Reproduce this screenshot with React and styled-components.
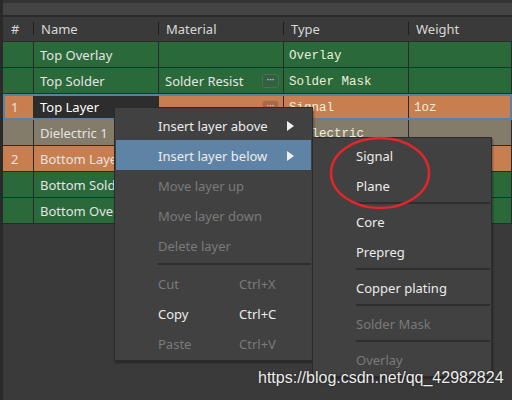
import React from 'react'
import styled, { createGlobalStyle } from 'styled-components'

const green = '#2a693a'
const orange = '#c97e4f'
const dielectric = '#847c6a'
const gridLine = '#2a2a2a'

const GlobalStyle = createGlobalStyle`
    body {
        margin : 0;
        background : #3a3a3a;
        font-family : "Noto Sans", "Open Sans", sans-serif;
    }
`

const Screen = styled.div`
    position : relative;
    width : 512px;
    height : 400px;
    overflow : hidden;
    background : #3a3a3a;
    border-left : 3px solid ${gridLine};
    box-sizing : border-box;
`

const TopStrip = styled.div`
    height : 12px;
    background : #444444;
    border-top : 3px solid #333333;
    border-bottom : 2px solid ${gridLine};
`

const Table = styled.div`
    display : flex;
    flex-direction : column;
`

const Row = styled.div`
    display : grid;
    grid-template-columns : 31px 125px 125px 125px 1fr;
    height : 26px;
    box-sizing : border-box;
    border-bottom : 1px solid ${gridLine};
    background : ${p => p.$bg || 'transparent'};
    color : #e4e4e4;
    font-size : 13px;
    outline : ${p => p.$selected ? '2px solid #5b80a7' : 'none'};
    outline-offset : -2px;
`

const HeaderRow = styled(Row)`
    height : 25px;
    border-bottom : 1px solid ${gridLine};
    color : #d8d8d8;
`

const HeadCell = styled.div`
    position : relative;
    display : flex;
    align-items : center;
    padding-left : ${p => p.$first ? '8px' : '7px'};

    &::before {
        content : '';
        display : ${p => p.$first ? 'none' : 'block'};
        position : absolute;
        left : -1px;
        top : 5px;
        height : 13px;
        width : 1px;
        background : #1f1f1f;
    }
`

const Cell = styled.div`
    display : flex;
    align-items : center;
    padding : 0 4px 0 6px;
    border-right : 1px solid ${gridLine};
    background : ${p => p.$dark ? '#2d2d2d' : 'transparent'};
    color : ${p => p.$dark ? '#ffffff' : 'inherit'};
    white-space : nowrap;
    overflow : hidden;
`

const IndexCell = styled(Cell)`
    padding-left : 8px;
`

const MonoCell = styled(Cell)`
    font-family : "Liberation Mono", "DejaVu Sans Mono", monospace;
    font-size : 12.5px;
    color : #efeedc;
    padding : 2px 4px 0 5px;
`

const DotsButton = styled.span`
    margin-left : auto;
    width : 17px;
    height : 14px;
    box-sizing : border-box;
    border-radius : 3px;
    border : 1px solid ${p => p.$edge};
    background : ${p => p.$fill};
    color : #d0d0d0;
    font-size : 10px;
    line-height : 9px;
    display : flex;
    justify-content : center;
`

const Menu = styled.div`
    position : absolute;
    left : ${p => p.$left}px;
    top : ${p => p.$top}px;
    width : ${p => p.$width}px;
    box-sizing : border-box;
    padding : 2px 1px;
    background : #414141;
    border : 1px solid #2b2b2b;
    box-shadow : 1px 2px 2px rgba(0, 0, 0, 0.35);
    font-size : 13px;
`

const Item = styled.div`
    display : grid;
    grid-template-columns : 81px 1fr 24px;
    align-items : center;
    height : 30px;
    padding : 1px 0 0 42px;
    box-sizing : border-box;
    background : ${p => p.$active ? '#5f83a5' : 'transparent'};
    color : ${p => p.$disabled ? '#7a7a7a' : '#ececec'};
    white-space : nowrap;
`

const Separator = styled.div`
    height : 2px;
    margin : ${p => p.$gap}px 0 ${p => p.$gap}px 42px;
    background : #2e2e2e;
`

const Arrow = () => (
    <svg width="7" height="10" viewBox="0 0 7 10">
        <polygon points="0,0 7,5 0,10" fill="#f0f0f0"/>
    </svg>
)

const Circle = styled.svg`
    position : absolute;
    left : 324px;
    top : 136px;
`

const Watermark = styled.div`
    position : absolute;
    left : 255px;
    top : 369px;
    font-family : "Liberation Sans", Arial, sans-serif;
    font-size : 16px;
    color : #eeeeee;
    text-shadow : 0 0 2px rgba(0, 0, 0, 0.6);
`

const rows = [
    { idx : '', name : 'Top Overlay', material : '', type : 'Overlay', weight : '', bg : green },
    { idx : '', name : 'Top Solder', material : 'Solder Resist', dots : ['#336041', '#46704f'], type : 'Solder Mask', weight : '', bg : green },
    { idx : '1', name : 'Top Layer', material : '', dots : ['#a86a42', '#b97a50'], type : 'Signal', weight : '1oz', bg : orange, selected : true },
    { idx : '', name : 'Dielectric 1', material : '', type : 'Dielectric', weight : '', bg : dielectric },
    { idx : '2', name : 'Bottom Layer', material : '', type : 'Signal', weight : '1oz', bg : orange },
    { idx : '', name : 'Bottom Solder', material : 'Solder Resist', type : 'Solder Mask', weight : '', bg : green },
    { idx : '', name : 'Bottom Overlay', material : '', type : 'Overlay', weight : '', bg : green },
]

const App = () => {
    return (
        <Screen>
            <GlobalStyle/>
            <TopStrip/>
            <Table>
                <HeaderRow>
                    <HeadCell $first>#</HeadCell>
                    <HeadCell>Name</HeadCell>
                    <HeadCell>Material</HeadCell>
                    <HeadCell>Type</HeadCell>
                    <HeadCell>Weight</HeadCell>
                </HeaderRow>
                {rows.map(r => (
                    <Row key={r.name} $bg={r.bg} $selected={r.selected}>
                        <IndexCell>{r.idx}</IndexCell>
                        <Cell $dark={r.selected}>{r.name}</Cell>
                        <Cell>
                            {r.material}
                            {r.dots && <DotsButton $fill={r.dots[0]} $edge={r.dots[1]}>···</DotsButton>}
                        </Cell>
                        <MonoCell>{r.type}</MonoCell>
                        <MonoCell>{r.weight}</MonoCell>
                    </Row>
                ))}
            </Table>

            <Menu $left={111} $top={107} $width={199}>
                <Item>Insert layer above<span/><Arrow/></Item>
                <Item $active>Insert layer below<span/><Arrow/></Item>
                <Item $disabled>Move layer up</Item>
                <Item $disabled>Move layer down</Item>
                <Item $disabled>Delete layer</Item>
                <Separator $gap={3}/>
                <Item $disabled>Cut<span>Ctrl+X</span></Item>
                <Item>Copy<span>Ctrl+C</span></Item>
                <Item $disabled>Paste<span>Ctrl+V</span></Item>
            </Menu>

            <Menu $left={309} $top={137} $width={180}>
                <Item>Signal</Item>
                <Item>Plane</Item>
                <Separator $gap={2}/>
                <Item>Core</Item>
                <Item>Prepreg</Item>
                <Separator $gap={2}/>
                <Item>Copper plating</Item>
                <Separator $gap={2}/>
                <Item $disabled>Solder Mask</Item>
                <Separator $gap={2}/>
                <Item $disabled>Overlay</Item>
            </Menu>

            <Circle width="106" height="78" viewBox="0 0 106 78">
                <ellipse cx="53" cy="37" rx="49" ry="35" fill="none" stroke="#e3262b" strokeWidth="2.5"/>
            </Circle>

            <Watermark>https://blog.csdn.net/qq_42982824</Watermark>
        </Screen>
    )
}

export default App
